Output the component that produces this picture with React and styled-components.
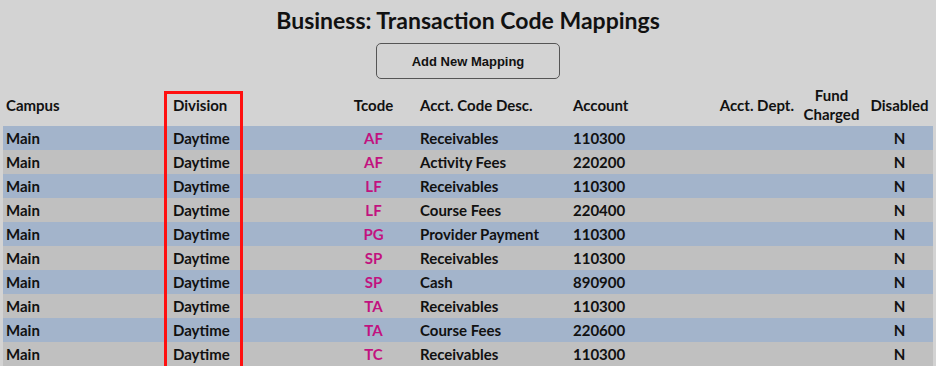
import React from 'react';
import styled, { createGlobalStyle } from 'styled-components';

const GlobalStyle = createGlobalStyle`
  html, body {
    margin: 0;
    padding: 0;
    background: #d3d3d3;
  }
  body {
    font-family: Lato, 'Noto Sans', sans-serif;
    color: #111;
  }
`;

const Page = styled.div`
  display: flex;
  flex-direction: column;
  align-items: center;
  padding: 0 3px;
  overflow: hidden;
  height: 366px;
`;

const Title = styled.h1`
  margin: 7px 0 0;
  font-size: 23px;
  line-height: 27px;
  font-weight: 700;
  color: #111;
`;

const AddButton = styled.button`
  margin-top: 9px;
  width: 184px;
  height: 38px;
  border: 1px solid #555;
  border-radius: 5px;
  background: transparent;
  font-family: 'Liberation Sans', Arial, sans-serif;
  font-size: 13px;
  font-weight: 700;
  color: #111;
`;

const TableWrap = styled.div`
  position: relative;
  align-self: stretch;
  margin-top: 5px;
`;

const Table = styled.table`
  width: 930px;
  table-layout: fixed;
  border-collapse: collapse;
  font-size: 15px;
  font-weight: 700;
`;

const Th = styled.th`
  height: 42px;
  padding: 0 3px;
  line-height: 19px;
  font-weight: 700;
  vertical-align: middle;
  white-space: nowrap;
  text-align: ${({ $align }) => $align || 'left'};
`;

const Row = styled.tr`
  background: ${({ $alt }) => ($alt ? '#c0c0c0' : '#a3b4cb')};
`;

const Td = styled.td`
  height: 24px;
  padding: 0 3px;
  line-height: 24px;
  white-space: nowrap;
  text-align: ${({ $align }) => $align || 'left'};
  color: ${({ $code }) => ($code ? '#c2127f' : '#111')};
`;

const Highlight = styled.div`
  position: absolute;
  left: 161px;
  top: 7px;
  width: 73px;
  height: 300px;
  border: 3px solid #ff1010;
  pointer-events: none;
`;

const columns = [
  { key: 'campus', label: 'Campus', width: 167 },
  { key: 'division', label: 'Division', width: 160 },
  { key: 'tcode', label: 'Tcode', width: 87, align: 'center' },
  { key: 'desc', label: 'Acct. Code Desc.', width: 153 },
  { key: 'account', label: 'Account', width: 130 },
  { key: 'dept', label: 'Acct. Dept.', width: 97, align: 'right' },
  { key: 'fund', label: ['Fund', 'Charged'], width: 69, align: 'center' },
  { key: 'disabled', label: 'Disabled', width: 67, align: 'center' },
];

const rows = [
  ['AF', 'Receivables', '110300'],
  ['AF', 'Activity Fees', '220200'],
  ['LF', 'Receivables', '110300'],
  ['LF', 'Course Fees', '220400'],
  ['PG', 'Provider Payment', '110300'],
  ['SP', 'Receivables', '110300'],
  ['SP', 'Cash', '890900'],
  ['TA', 'Receivables', '110300'],
  ['TA', 'Course Fees', '220600'],
  ['TC', 'Receivables', '110300'],
].map(([tcode, desc, account]) => ({
  campus: 'Main',
  division: 'Daytime',
  tcode,
  desc,
  account,
  dept: '',
  fund: '',
  disabled: 'N',
}));

const App = () => {
  return (
    <Page>
      <GlobalStyle />
      <Title>Business: Transaction Code Mappings</Title>
      <AddButton>Add New Mapping</AddButton>
      <TableWrap>
        <Table>
          <colgroup>
            {columns.map((c) => (
              <col key={c.key} style={{ width: c.width }} />
            ))}
          </colgroup>
          <thead>
            <tr>
              {columns.map((c) => (
                <Th key={c.key} $align={c.align}>
                  {Array.isArray(c.label)
                    ? c.label.map((l, i) => (
                        <React.Fragment key={l}>
                          {i > 0 && <br />}
                          {l}
                        </React.Fragment>
                      ))
                    : c.label}
                </Th>
              ))}
            </tr>
          </thead>
          <tbody>
            {rows.map((r, i) => (
              <Row key={i} $alt={i % 2 === 1}>
                {columns.map((c) => (
                  <Td key={c.key} $align={c.align} $code={c.key === 'tcode'}>
                    {r[c.key]}
                  </Td>
                ))}
              </Row>
            ))}
          </tbody>
        </Table>
        <Highlight />
      </TableWrap>
    </Page>
  );
};

export default App;
